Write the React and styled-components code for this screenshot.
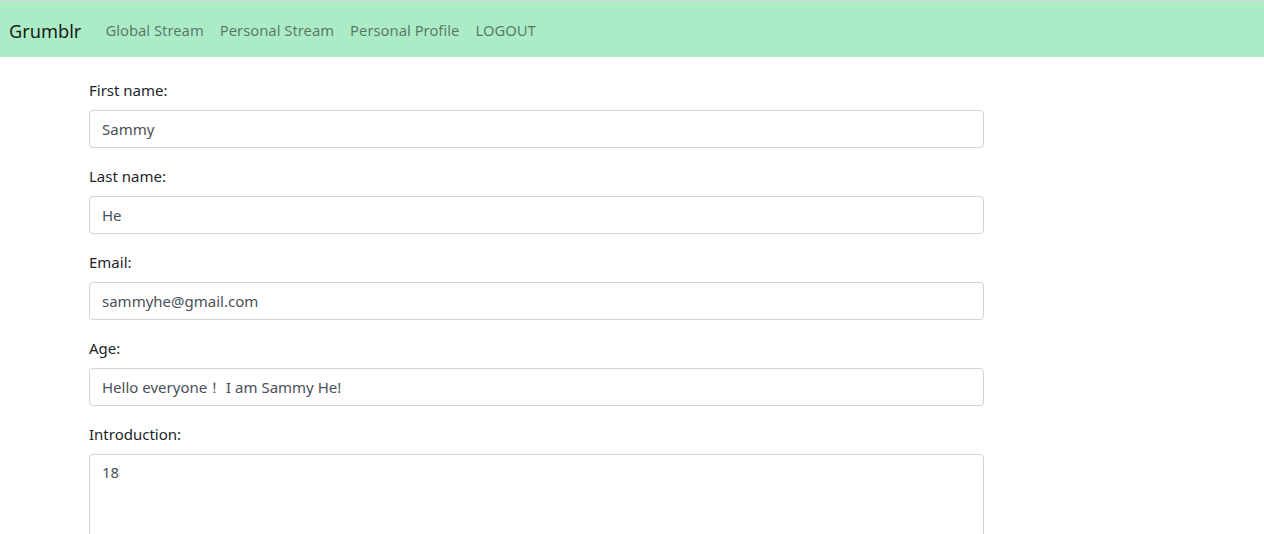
import React from "react";
import styled, { createGlobalStyle } from "styled-components";

const Global = createGlobalStyle`
  html, body { margin: 0; padding: 0; background: #fff; }
  body {
    font-family: "Noto Sans", "Open Sans", sans-serif;
    font-size: 16px;
    line-height: 1.5;
    color: #212529;
    border-top: 1px solid #d6d6d6;
  }
  * { box-sizing: border-box; }
`;

const Navbar = styled.nav`
  display: flex;
  align-items: center;
  height: 56px;
  padding: 3px 16px 0 9px;
  background: #abebc6;
`;

const Brand = styled.a`
  font-size: 18.2px;
  color: rgba(0, 0, 0, 0.9);
  margin-right: 16px;
  text-decoration: none;
  line-height: 30px;
`;

const NavLinks = styled.div`
  display: flex;
`;

const NavLink = styled.a`
  color: rgba(0, 0, 0, 0.5);
  padding: 8px;
  font-size: 14.8px;
  text-decoration: none;
`;

const Form = styled.form`
  width: 895px;
  margin: 21px 0 0 89px;
`;

const Group = styled.div`
  margin-bottom: 16px;
`;

const Label = styled.label`
  display: block;
  margin-bottom: 8px;
  font-size: 15px;
  line-height: 24px;
`;

const Input = styled.input`
  display: block;
  width: 100%;
  height: 38px;
  padding: 6px 12px;
  font-family: inherit;
  font-size: 15px;
  line-height: 1.5;
  color: #495057;
  background: #fff;
  border: 1px solid #ced4da;
  border-radius: 4px;
  outline: none;
`;

const TextArea = styled.textarea`
  display: block;
  width: 100%;
  height: 120px;
  padding: 6px 12px;
  font-family: inherit;
  font-size: 15px;
  line-height: 1.5;
  color: #495057;
  background: #fff;
  border: 1px solid #ced4da;
  border-radius: 4px;
  resize: none;
  outline: none;
`;

const fields = [
  ["First name:", "Sammy"],
  ["Last name:", "He"],
  ["Email:", "sammyhe@gmail.com"],
  ["Age:", "Hello everyone！ I am Sammy He!"],
];

export default function App() {
  return (
    <>
      <Global />
      <Navbar>
        <Brand href="#">Grumblr</Brand>
        <NavLinks>
          <NavLink href="#">Global Stream</NavLink>
          <NavLink href="#">Personal Stream</NavLink>
          <NavLink href="#">Personal Profile</NavLink>
          <NavLink href="#">LOGOUT</NavLink>
        </NavLinks>
      </Navbar>
      <Form onSubmit={(e) => e.preventDefault()}>
        {fields.map(([label, value]) => (
          <Group key={label}>
            <Label>{label}</Label>
            <Input defaultValue={value} />
          </Group>
        ))}
        <Group>
          <Label>Introduction:</Label>
          <TextArea defaultValue="18" />
        </Group>
      </Form>
    </>
  );
}
